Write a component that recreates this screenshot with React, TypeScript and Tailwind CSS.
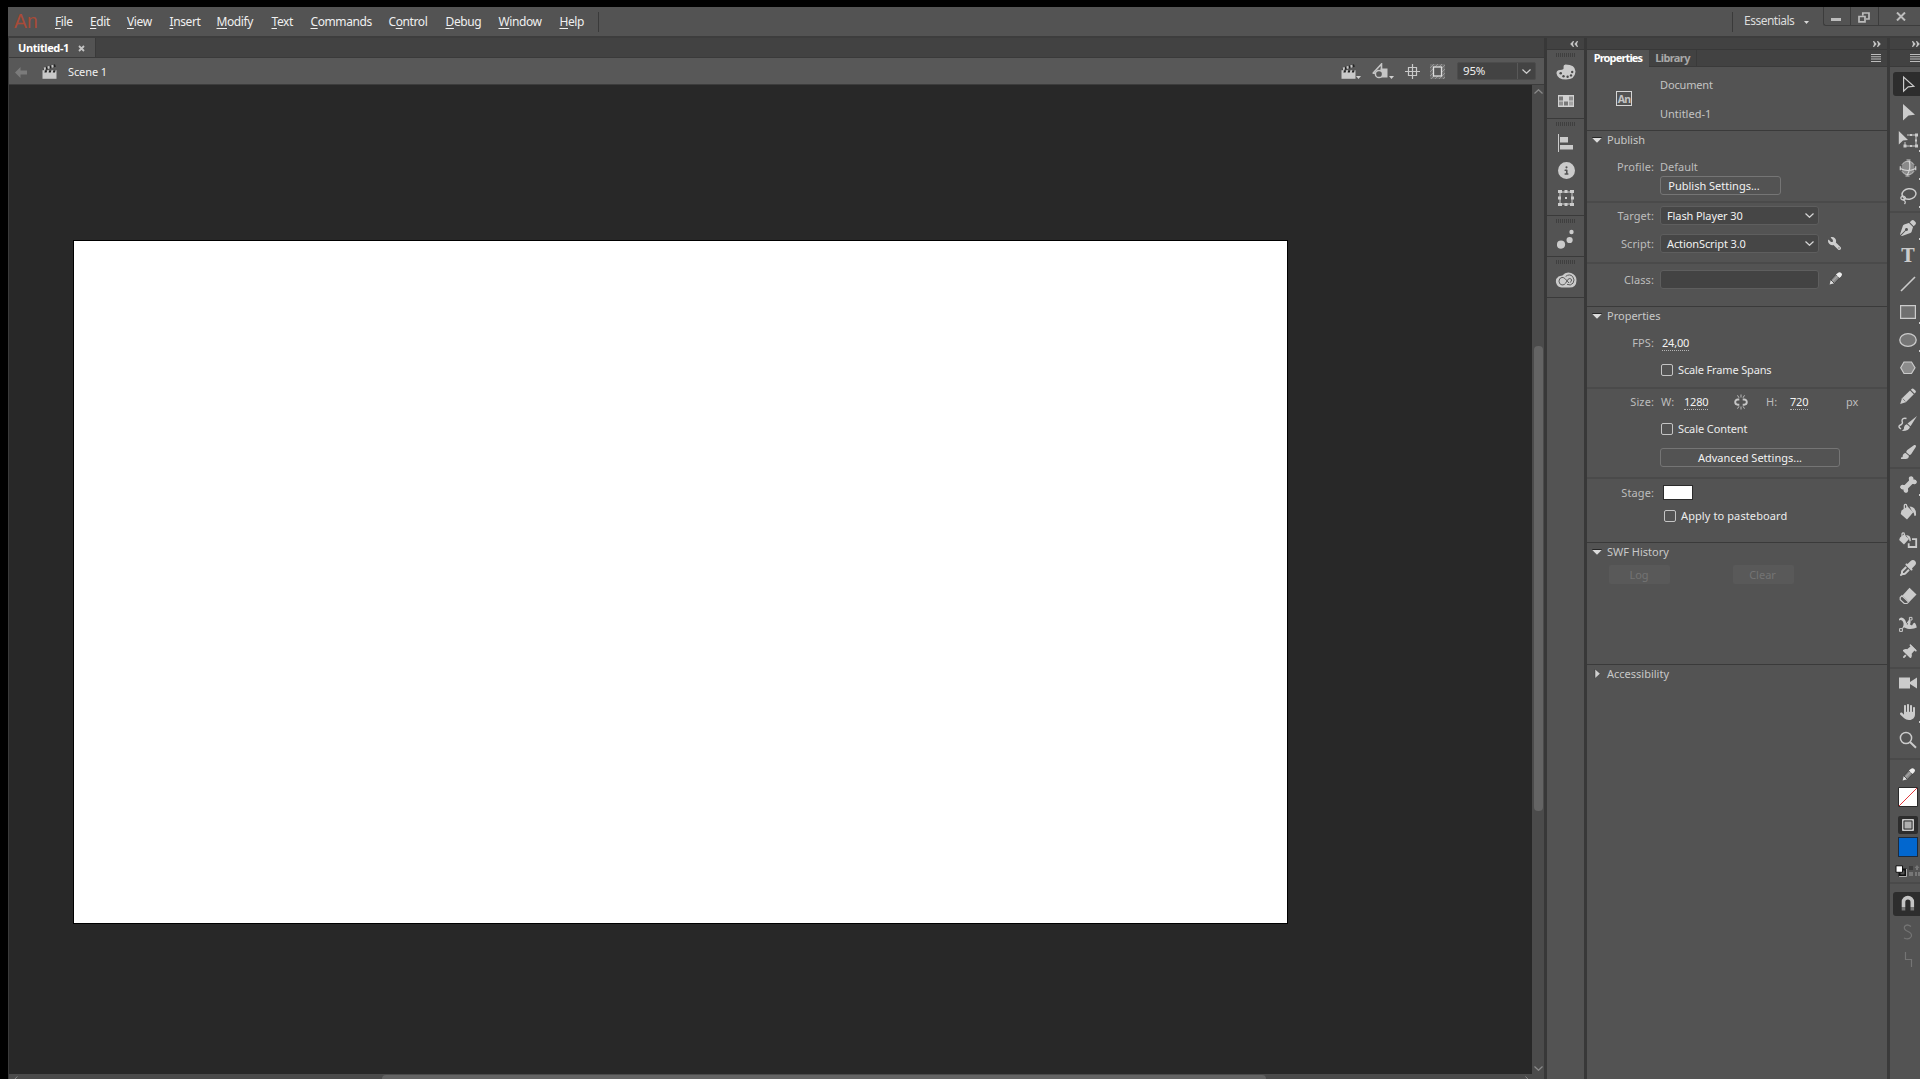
import { ReactNode } from 'react';
import {
  FaBone,
  FaCircleInfo,
  FaEyeDropper,
  FaHand,
  FaPaintbrush,
  FaPenNib,
  FaThumbtack,
  FaWrench
} from 'react-icons/fa6';

type MenuItem = {
  label: string;
  key: number;
  className: string;
};

// key is the index of the underlined letter
const menu: MenuItem[] = [
  { label: 'File', key: 0, className: 'w-[35px]' },
  { label: 'Edit', key: 0, className: 'w-[37px]' },
  { label: 'View', key: 0, className: 'w-[42.5px]' },
  { label: 'Insert', key: 0, className: 'w-[47px]' },
  { label: 'Modify', key: 0, className: 'w-[55px]' },
  { label: 'Text', key: 0, className: 'w-[39px]' },
  { label: 'Commands', key: 0, className: 'w-[78px]' },
  { label: 'Control', key: 1, className: 'w-[57px]' },
  { label: 'Debug', key: 0, className: 'w-[53px]' },
  { label: 'Window', key: 0, className: 'w-[61px]' },
  { label: 'Help', key: 0, className: 'w-[38px]' }
];

function Chevron({ className = '' }: { className?: string }) {
  return (
    <svg width="9" height="5" viewBox="0 0 9 5" fill="none" stroke="currentColor" strokeWidth="1.2" className={`shrink-0 ${className}`}>
      <path d="M.5 .5 4.5 4.3 8.5 .5" />
    </svg>
  );
}

function Chevrons({ flip = false }: { flip?: boolean }) {
  return (
    <svg width="8" height="6" viewBox="0 0 8 6" fill="#c4c4c4" className={`shrink-0 ${flip ? 'rotate-180' : ''}`}>
      <path d="M0 0 1 0 3.7 3 1 6 0 6 1 3ZM4 0 5 0 7.8 3 5 6 4 6 5 3Z" />
    </svg>
  );
}

function Burger() {
  return (
    <svg width="10" height="8" viewBox="0 0 10 8" fill="#bdbdbd" className="shrink-0">
      <path d="M0 0h10v1H0zM0 2.3h10v1H0zM0 4.6h10v1H0zM0 6.9h10v1H0z" />
    </svg>
  );
}

function Clapper() {
  return (
    <svg width="15" height="15" viewBox="0 0 15 15" className="shrink-0">
      <path d="M.8 3.8 13 .2 13.8 2.8 1.6 6.4Z" fill="#222" />
      <path d="M1.5 3.6 3.7 2.9 4 5.6 2 6.2ZM5.3 2.5 7.5 1.8 7.8 4.5 5.8 5.1ZM9.2 1.3 11.4 .7 11.7 3.3 9.7 3.9Z" fill="#c6c6c6" />
      <path d="M.5 6.2h14V14.8H.5z" fill="#c9c9c9" />
      <path d="M3 6.2h2.2L4.6 8.4H2.4zM7.2 6.2h2.2L8.8 8.4H6.6zM11.4 6.2h2.2L13 8.4H10.8z" fill="#222" />
    </svg>
  );
}

function SmallPencil() {
  return (
    <svg width="13" height="13" viewBox="0 0 13 13" className="shrink-0">
      <path d="M.6 12.6 1.8 8 5.3 11.3Z" fill="#dedede" />
      <path d="M1.9 7.9 6.7 2.6 10.5 6.1 5.4 11.4Z" fill="#8a8a8a" stroke="#333" strokeWidth=".7" />
      <path d="M3.6 9.2 8.5 4.2" stroke="#a6a6a6" strokeWidth="1.2" />
      <path d="M6.9 2.6 8.8 .9Q10.6 -.4 12.2 1T12.2 4.2L10.4 6Z" fill="#ededed" />
    </svg>
  );
}

function Toolbar() {
  return (
    <div className="flex h-[27px] shrink-0 items-center border-b border-[#3c3c3c] bg-[#585858] pl-[6px] text-[#f0f0f0]">
      <svg width="12" height="11" viewBox="0 0 12 11" fill="#7b7b7b" className="mt-0.5 mr-[15px]">
        <path d="M0 5.5 5.5 0V3.5H12V7.5H5.5V11Z" />
      </svg>
      <Clapper />
      <span className="mt-px ml-[11px] text-[11px] leading-4 tracking-[-0.1px]">Scene 1</span>
      <div className="ml-auto flex items-center pr-[8px]">
        <Clapper />
        <Dot />
        <svg width="17" height="16" viewBox="0 0 17 16" className="ml-[11px]">
          <path d="M1.2 10 9.5 1V7" fill="none" stroke="#c6c6c6" strokeWidth="1.6" />
          <path d="M8.5 5.5H15.5V14.5H8.5Z" fill="#c6c6c6" />
          <circle cx="7" cy="11" r="3.6" fill="#585858" stroke="#c6c6c6" strokeWidth="1.5" />
          <path d="M.6 10.2H4" stroke="#c6c6c6" strokeWidth="1.5" />
        </svg>
        <Dot />
        <svg width="15" height="15" viewBox="0 0 15 15" fill="none" stroke="#c9c9c9" strokeWidth="1.2" className="ml-[11px]">
          <path d="M7.5 0V15M0 7.5H15M3.5 3.5H11.5V11.5H3.5Z" />
        </svg>
        <svg width="15" height="15" viewBox="0 0 15 15" className="ml-[10px]">
          <rect width="15" height="15" fill="#6c6c6c" />
          <path d="M0 4 4 0M0 8 8 0M0 12 12 0M0 16 16 0M4 16 16 4M8 16 16 8M12 16 16 12" stroke="#999" strokeWidth=".9" />
          <rect x="3.5" y="3" width="8" height="9" fill="#585858" stroke="#dedede" strokeWidth="1.3" />
        </svg>
        <div className="ml-[12px] flex h-[18px] w-[79px] rounded-[2px] border border-[#4c4c4c] bg-[#434343]">
          <span className="w-[60px] border-r border-[#585858] pl-[5px] text-[11.5px] leading-4 tracking-[-0.2px]">95%</span>
          <Chevron className="mt-[6px] ml-[4px] text-[#cfcfcf]" />
        </div>
      </div>
    </div>
  );
}

function Dot() {
  return (
    <svg width="5" height="3" viewBox="0 0 5 3" fill="#d0d0d0" className="mt-[13px]">
      <path d="M0 0H5L2.5 3Z" />
    </svg>
  );
}

function Grip() {
  return (
    <svg width="20" height="4" viewBox="0 0 20 4" fill="#3f3f3f" className="mx-auto mt-[3px] shrink-0">
      <path d="M0 0h1v4H0zM2 0h1v4H2zM4 0h1v4H4zM6 0h1v4H6zM8 0h1v4H8zM10 0h1v4H10zM12 0h1v4H12zM14 0h1v4H14zM16 0h1v4H16zM18 0h1v4H18z" />
    </svg>
  );
}

function DockCell({ children }: { children: ReactNode }) {
  return <div className="flex h-7 items-center justify-center pl-px text-[#cbcbcb]">{children}</div>;
}

function Dock() {
  return (
    <div className="flex w-[43px] shrink-0 flex-col border-x-[3px] border-[#383838] bg-[#535353]">
      <div className="flex h-3 items-center justify-end border-b border-[#383838] bg-[#424242] pr-[6px]">
        <Chevrons flip />
      </div>
      <div className="h-[69px] border-b border-[#3a3a3a]">
        <Grip />
        <div className="pt-px">
          <DockCell>
            <svg width="20" height="16" viewBox="0 0 20 16">
              <path d="M9.5 .5Q19.3 .5 19.5 7.5 19 15.5 10 15.5 1.5 15.5 .5 9.5 .3 6.3 4 6 8.5 6 7.5 3 7.3 .8 9.5 .5Z" fill="currentColor" />
              <g fill="#4a4a4a">
                <circle cx="4.7" cy="9.3" r="1.3" />
                <circle cx="7.5" cy="12.3" r="1.2" />
                <circle cx="11.6" cy="12.8" r="1.2" />
                <circle cx="15" cy="11.4" r="1.2" />
                <circle cx="16.2" cy="8" r="1.2" />
              </g>
            </svg>
          </DockCell>
          <DockCell>
            <svg width="16" height="12" viewBox="0 0 16 12" className="mt-px">
              <path d="M0 0H16V12H0Z" fill="#d2d2d2" />
              <path d="M1 1.5H5V5.5H1ZM6 6.5H10V10.5H6Z" fill="#777" />
              <path d="M11 1.5H15V5.5H11ZM1 6.5H5V10.5H1Z" fill="#8f8f8f" />
              <path d="M11 6.5H15V10.5H11Z" fill="#a5a5a5" />
            </svg>
          </DockCell>
        </div>
      </div>
      <div className="h-[97px] border-b border-[#3a3a3a]">
        <Grip />
        <div className="pt-[2px]">
          <DockCell>
            <svg width="16" height="18" viewBox="0 0 16 18" fill="currentColor" className="mt-px">
              <path d="M0 0h1v18H0zM2 3h8v5.5H2zM2 11h13v4.5H2z" />
            </svg>
          </DockCell>
          <DockCell>
            <FaCircleInfo size={17} />
          </DockCell>
          <DockCell>
            <svg width="16" height="16" viewBox="0 0 16 16" fill="currentColor">
              <path d="M2 2H14V14H2Z" fill="none" stroke="currentColor" />
              <path d="M0 0h4v3H0zM6.5 0h3v3h-3zM12 0h4v3h-4zM0 6.5h3v3H0zM13 6.5h3v3h-3zM0 13h4v3H0zM6.5 13h3v3h-3zM12 13h4v3h-4zM7 7h2v2H7z" />
            </svg>
          </DockCell>
        </div>
      </div>
      <div className="h-[41px] border-b border-[#3a3a3a]">
        <Grip />
        <div className="pt-0.5">
          <DockCell>
            <svg width="18" height="20" viewBox="0 0 18 20" fill="currentColor">
              <circle cx="4" cy="15.6" r="4.1" />
              <circle cx="12.6" cy="11" r="3.1" />
              <circle cx="14.5" cy="3" r="2.2" />
            </svg>
          </DockCell>
        </div>
      </div>
      <div className="h-[41px] border-b border-[#3a3a3a]">
        <Grip />
        <div className="pt-0.5">
          <DockCell>
            <svg width="22" height="16" viewBox="0 0 22 16">
              <path d="M6.5 15.5A6 6 0 0 1 3.5 4.6Q4.8 3.6 7.4 3.4A8 8 0 0 1 21.5 8.4Q21.3 15.5 14.5 15.5Z" fill="#cbcbcb" />
              <path d="M10.6 11.2Q9.5 13 7 13A3.9 3.9 0 0 1 7 5.4Q9 5.4 10.3 6.9L14 11M10.7 4.4Q14.5 1.4 17.7 4.6 20.2 8 18 11.2 15.5 14.2 12 12.3M10.6 11.2 13 7.3Q15 5.6 16.5 7.4 17 9.5 14.8 10.6" fill="none" stroke="#5a5a5a" />
            </svg>
          </DockCell>
        </div>
      </div>
    </div>
  );
}

function Section({ title, closed = false, className, children }: { title: string; closed?: boolean; className: string; children?: ReactNode }) {
  return (
    <section className={`shrink-0 border-t border-[#3a3a3a] ${className}`}>
      <div className="flex h-[18px] items-center pl-[5px] text-[#c8c8c8]">
        <svg width="10" height="10" viewBox="0 0 10 10" className="mr-[5px]">
          {closed ? (
            <path d="M3 0V9.5L8.3 4.7Z" fill="#d0d0d0" stroke="#333" strokeWidth=".5" />
          ) : (
            <>
              <path d="M.3 2H9.7V3H.3Z" fill="#262626" />
              <path d="M.3 3H9.7L5 7.8Z" fill="#dcdcdc" />
            </>
          )}
        </svg>
        {title}
      </div>
      {children}
    </section>
  );
}

function Label({ children }: { children: ReactNode }) {
  return <span className="mr-[6px] w-[67px] shrink-0 text-right tracking-[0.1px] text-[#bdbdbd]">{children}</span>;
}

function Rule({ className = '' }: { className?: string }) {
  return <div className={`h-0.5 shrink-0 bg-[#4a4a4a] ${className}`} />;
}

function Select({ value }: { value: string }) {
  return (
    <div className="flex h-[19px] w-[159px] items-center justify-between rounded-[3px] border border-[#5e5e5e] bg-[#464646] pr-[4px] pl-[6px] tracking-[-0.1px] text-[#f2f2f2]">
      {value}
      <Chevron className="text-[#d6d6d6]" />
    </div>
  );
}

function Checkbox({ label, className }: { label: string; className: string }) {
  return (
    <div className={`flex h-3 items-center text-[#ececec] ${className}`}>
      <span className="mr-[5px] h-3 w-3 rounded-[2px] border border-[#c4c4c4]" />
      {label}
    </div>
  );
}

function HotText({ children }: { children: string }) {
  return <span className="border-b border-dotted border-[#b5b5b5] leading-[13px] tracking-[-0.2px] text-[#f2f2f2]">{children}</span>;
}

function PropertiesPanel() {
  return (
    <div className="flex w-[300px] shrink-0 flex-col bg-[#535353] text-[11px] leading-[14px]">
      <div className="flex h-3 shrink-0 items-center justify-end border-b border-[#383838] bg-[#424242] pr-[6px]">
        <Chevrons />
      </div>
      <div className="flex h-[17px] shrink-0 bg-[#424242] font-bold tracking-[-0.85px]">
        <span className="w-[62px] bg-[#535353] pt-px text-center text-white">Properties</span>
        <span className="w-[48px] border-r border-b border-[#3a3a3a] pt-px text-center tracking-[-0.6px] text-[#a8a8a8]">Library</span>
        <div className="flex flex-1 items-center justify-end border-b border-[#3a3a3a] pr-[6px]">
          <Burger />
        </div>
      </div>
      <div className="flex h-[63px] shrink-0 text-[#c3c3c3]">
        <span className="mt-[24px] ml-[29px] flex h-[15px] w-4 items-center justify-center border border-[#d5d5d5] text-[10.5px] font-bold tracking-[-0.7px]">An</span>
        <div className="ml-[28px] flex flex-col gap-[15px] pt-[11px]">
          <span className="tracking-[-0.15px]">Document</span>
          <span>Untitled-1</span>
        </div>
      </div>

      <Section title="Publish" className="h-[176px]">
        <div className="flex pt-[11px]">
          <Label>Profile:</Label>
          <span className="text-[#bdbdbd]">Default</span>
        </div>
        <button className="mt-[2px] ml-[73px] block h-[19px] w-[121px] rounded-[3px] border border-[#757575] pr-[13px] text-center text-[#f2f2f2]">Publish Settings...</button>
        <Rule className="mt-[6px]" />
        <div className="flex items-center pt-[3px]">
          <Label>Target:</Label>
          <Select value="Flash Player 30" />
        </div>
        <div className="flex items-center pt-[9px]">
          <Label>Script:</Label>
          <Select value="ActionScript 3.0" />
          <FaWrench size={13} className="ml-[9px] scale-x-[-1] text-[#cfcfcf]" />
        </div>
        <Rule className="mt-[9px]" />
        <div className="flex items-center pt-[6px]">
          <Label>Class:</Label>
          <div className="mr-[10px] h-[19px] w-[159px] rounded-[3px] border border-[#5e5e5e] bg-[#434343]" />
          <div className="-mt-0.5">
            <SmallPencil />
          </div>
        </div>
      </Section>

      <Section title="Properties" className="h-[236px]">
        <div className="flex pt-[11px]">
          <Label>FPS:</Label>
          <span className="ml-0.5">
            <HotText>24,00</HotText>
          </span>
        </div>
        <Checkbox label="Scale Frame Spans" className="mt-[14px] ml-[74px] tracking-[-0.15px]" />
        <Rule className="mt-[11px]" />
        <div className="flex pt-[6px] text-[#bdbdbd]">
          <Label>Size:</Label>
          <span className="ml-px w-[23px]">W:</span>
          <span className="w-[49px]">
            <HotText>1280</HotText>
          </span>
          <svg width="16" height="16" viewBox="0 0 16 16" fill="none" stroke="#c6c6c6" className="-mt-px">
            <path d="M6.3 5.5H4.8A2.6 2.6 0 0 0 4.8 10.7H6.3M9.7 5.5H11.2A2.6 2.6 0 0 1 11.2 10.7H9.7" strokeWidth="1.9" />
            <path d="M8 .5V3.5M8 12.5V15.5M4.5 1.3 6 3.8M11.5 1.3 10 3.8M4.5 14.7 6 12.3M11.5 14.7 10 12.3" strokeWidth=".9" />
          </svg>
          <span className="ml-[17px] w-6">H:</span>
          <span className="w-[56px]">
            <HotText>720</HotText>
          </span>
          <span>px</span>
        </div>
        <Checkbox label="Scale Content" className="mt-[13px] ml-[74px] tracking-[-0.1px]" />
        <button className="mt-[13px] ml-[73px] block h-[19px] w-[180px] rounded-[3px] border border-[#757575] text-center text-[#f2f2f2]">Advanced Settings...</button>
        <Rule className="mt-[10px]" />
        <div className="flex items-center pt-[6px]">
          <Label>Stage:</Label>
          <span className="ml-[3px] h-[15px] w-[30px] border border-[#2b2b2b] bg-white" />
        </div>
        <Checkbox label="Apply to pasteboard" className="mt-[10px] ml-[77px] tracking-[0.1px]" />
      </Section>

      <Section title="SWF History" className="h-[122px]">
        <div className="flex gap-[63px] pt-[4px] pl-[22px] text-[#747474]">
          <span className="h-[19px] w-[61px] rounded-[2px] bg-[#595959] pt-[3px] pr-px text-center">Log</span>
          <span className="h-[19px] w-[61px] rounded-[2px] bg-[#595959] pt-[3px] pr-0.5 text-center">Clear</span>
        </div>
      </Section>
      <Section title="Accessibility" closed className="flex-1" />
    </div>
  );
}

function Tool({ children, corner = false, active = false }: { children: ReactNode; corner?: boolean; active?: boolean }) {
  return (
    <div className="flex h-7 shrink-0 items-center pl-[3px] text-[#cbcbcb]">
      <div className={`flex h-6 w-[27px] items-center rounded-l-[3px] pl-[5px] ${active ? 'bg-[#2d2d2d]' : ''}`}>
        <span className="flex w-5 shrink-0 justify-center">{children}</span>
        {corner && <span className="mt-[21px] ml-px h-[2px] w-px bg-[#d0d0d0]" />}
      </div>
    </div>
  );
}

function Glyph({ children }: { children: ReactNode }) {
  return (
    <svg width="20" height="20" viewBox="0 0 20 20" fill="currentColor" className="shrink-0">
      {children}
    </svg>
  );
}

function Tools() {
  return (
    <div className="flex w-[33px] shrink-0 flex-col overflow-hidden border-l-[3px] border-[#3a3a3a] bg-[#535353]">
      <div className="flex h-3 shrink-0 items-center justify-end border-b border-[#383838] bg-[#424242]">
        <Chevrons />
      </div>
      <div className="mb-[3px] flex h-[17px] shrink-0 items-center justify-end border-b border-[#3a3a3a] bg-[#424242]">
        <Burger />
      </div>
      <Tool active>
        <Glyph>
          <path d="M5.6 3V17.2L10.2 12.9 15.8 12.3Z" fill="none" stroke="currentColor" strokeWidth="1.2" />
        </Glyph>
      </Tool>
      <Tool>
        <Glyph>
          <path d="M5 2V18.5L10.5 13.5 17 12.7Z" />
        </Glyph>
      </Tool>
      <Tool corner>
        <Glyph>
          <path d="M.8 1V14.5L5 10.5 10 10Z" />
          <path d="M9 5H18V16H7V12" fill="none" stroke="currentColor" />
          <path d="M17 3.5h3v3h-3zM12 4h2v2h-2zM17 9.5h2v2h-2zM17 14.5h3v3h-3zM12 15h2v2h-2zM5.5 14.5h3v3h-3z" />
        </Glyph>
      </Tool>
      <Tool corner>
        <Glyph>
          <circle cx="10" cy="10" r="6.6" fill="#8a8a8a" />
          <path d="M4 6.7A7 7 0 0 1 16 6.7M4 13.3A7 7 0 0 0 16 13.3" fill="none" stroke="currentColor" />
          <path d="M11 2.5Q13.5 10 9 17.5M2.3 10.5Q10 14.5 17.7 10.5" fill="none" stroke="#d8d8d8" strokeWidth="1.1" />
          <path d="M2.3 8.3v4M17.7 8.3v4M8.5 2h4M7.5 18h4" stroke="#d0d0d0" strokeWidth="1.2" />
        </Glyph>
      </Tool>
      <Tool corner>
        <Glyph>
          <ellipse cx="11" cy="8" rx="7" ry="5.2" transform="rotate(-8 11 8)" fill="none" stroke="currentColor" strokeWidth="1.5" />
          <path d="M6.5 18Q8.5 15.5 5.5 14.2 2.2 13.5 3 11.3 5.2 9 7.3 11.5 7.7 14.3 4.8 13" fill="none" stroke="currentColor" strokeWidth="1.3" />
        </Glyph>
      </Tool>
      <Rule className="mt-px mb-px" />
      <Tool corner>
        <FaPenNib size={16} />
      </Tool>
      <Tool>
        <span className="font-['DejaVu_Serif',serif] text-[18px] leading-5 font-bold">T</span>
      </Tool>
      <Tool>
        <Glyph>
          <path d="M3 17 17 3" stroke="currentColor" strokeWidth="1.6" />
        </Glyph>
      </Tool>
      <Tool corner>
        <Glyph>
          <path d="M2.6 3.6H17.4V16.4H2.6Z" fill="#707070" stroke="currentColor" strokeWidth="1.2" />
        </Glyph>
      </Tool>
      <Tool corner>
        <Glyph>
          <ellipse cx="10" cy="10" rx="8.2" ry="6.4" fill="#767676" stroke="currentColor" strokeWidth="1.3" />
        </Glyph>
      </Tool>
      <Tool>
        <Glyph>
          <path d="M6 4H13.5L17 9.7 13.5 15.5H6L2.7 9.7Z" fill="#8c8c8c" stroke="currentColor" strokeWidth="1.2" />
        </Glyph>
      </Tool>
      <Tool>
        <Glyph>
          <path d="M2.2 18 4 12.3 12 4.5 15.8 8.3 7.8 16.2Z" />
          <path d="M12.8 3.7 14 2.7Q15 2.2 16 3.2L17.6 4.8Q18.3 5.8 17.6 6.6L16.5 7.5Z" />
          <path d="M4.8 12.7 7.4 15.4" stroke="#6a6a6a" strokeWidth=".8" />
        </Glyph>
      </Tool>
      <Tool>
        <Glyph>
          <path d="M19 2 9.5 9.5 12.5 12.3Z" />
          <path d="M8.8 10.2 12 13Q10.5 17.5 3.5 17 6.5 15.5 6 13.2 6.5 10.7 8.8 10.2Z" />
          <path d="M8.5 4.5Q4 3.5 4 7 5.5 10 1.5 11.5 0 13 3 15" fill="none" stroke="currentColor" strokeWidth="1.4" />
        </Glyph>
      </Tool>
      <Tool>
        <FaPaintbrush size={16} />
      </Tool>
      <Rule className="mt-px mb-px" />
      <Tool corner>
        <FaBone size={17} className="-rotate-45" />
      </Tool>
      <Tool>
        <Glyph>
          <path d="M3.5 8.5 9.5 4.5 15.3 10.2 9 17.5 2.7 12Z" />
          <path d="M6.3 9V3.6Q6.5 2 8.2 2.5L10.5 9" fill="none" stroke="currentColor" strokeWidth="1.3" />
          <path d="M11.5 4.5Q18.5 4.5 18 13.5L16.4 14Q16.5 10.5 14 9Z" />
        </Glyph>
      </Tool>
      <Tool>
        <Glyph>
          <path d="M2 7.5 6 4.5 11 9 6 14.5 1.2 10Z" />
          <path d="M4 7.5V3.7Q4.5 2.5 6 3L7.5 7.5" fill="none" stroke="currentColor" strokeWidth="1.2" />
          <path d="M8 5Q13.2 5 12.8 11L11.6 11.4Q11.6 9.3 10 8Z" />
          <path d="M14 9.2H18.2V17H10.7V13.3" fill="none" stroke="currentColor" strokeWidth="1.8" />
        </Glyph>
      </Tool>
      <Tool>
        <FaEyeDropper size={16} />
      </Tool>
      <Tool>
        <Glyph>
          <path d="M11.5 1.8 18.5 8.5 11.3 16 4.5 9.5Z" />
          <path d="M4 9.7 10.6 16.1 9 17.5H6.2L2.2 13.7V11.5Z" fill="none" stroke="currentColor" strokeWidth="1.2" />
        </Glyph>
      </Tool>
      <Tool>
        <Glyph>
          <path d="M1 5Q2.5 2.5 5 4 8.5 6.5 8 10L10 10.5Q9.5 6.5 11.5 6 13.5 6.5 12 10.5L14 11.5Q15.5 8 17 9 18.5 11 18.8 13.5 15.5 15.5 9.5 14.8L5 13Q6.5 8.5 4 6.5 2.5 5.5 1 6.5Z" />
          <path d="M3 16 12.5 5" stroke="currentColor" strokeWidth="1.1" />
          <path d="M11.4 3.4h2.6v2.6h-2.6zM1.6 14.6h2.8v2.8H1.6z" fill="#535353" stroke="currentColor" />
        </Glyph>
      </Tool>
      <Tool>
        <FaThumbtack size={15} className="rotate-45" />
      </Tool>
      <Rule className="mt-px" />
      <Tool>
        <Glyph>
          <path d="M1 4.5H12V15.5H1ZM12 9 19 4.5V15.5L12 11Z" />
        </Glyph>
      </Tool>
      <Tool corner>
        <FaHand size={16} className="mt-px" />
      </Tool>
      <Tool>
        <Glyph>
          <circle cx="8" cy="9" r="5.6" fill="none" stroke="currentColor" strokeWidth="1.5" />
          <path d="M12 13 18 18.7" stroke="currentColor" strokeWidth="2" />
        </Glyph>
      </Tool>
      <Rule className="mt-[5px]" />
      <div className="flex flex-col items-start pt-[8px] pl-[8px]">
        <div className="ml-[4px]">
          <SmallPencil />
        </div>
        <svg width="20" height="20" viewBox="0 0 20 20" className="mt-[6px]">
          <path d="M.5 .5H19.5V19.5H.5Z" fill="#fff" stroke="#2a2a2a" />
          <path d="M1 19 19 1" stroke="#e0383c" />
        </svg>
        <svg width="20" height="18" viewBox="0 0 20 18" className="mt-[9px]">
          <rect width="20" height="18" rx="2" fill="#2d2d2d" />
          <path d="M4.5 3.5H15.5V14.5H4.5Z" fill="#b0b0b0" stroke="#c8c8c8" />
          <path d="M6 5H14V13H6Z" fill="none" stroke="#333" />
        </svg>
        <div className="mt-[3px] h-5 w-5 border border-[#1e2b3c] bg-[#0267cf]" />
      </div>
      <svg width="26" height="12" viewBox="0 0 26 12" className="mt-[8px] ml-[5px] shrink-0">
        <path d="M4.5 4.5H10.5V10.5H4.5Z" fill="none" stroke="#111" strokeWidth="2" />
        <path d="M11.5 4V11.5H4" fill="none" stroke="#ccc" strokeWidth=".8" />
        <path d="M1 .8H7.5V7.3H1Z" fill="#fff" stroke="#111" />
        <path d="M14 1h4v4h-4z" fill="#3c3c3c" />
        <path d="M14 7h4v4h-4zM20 7h2v4h-2zM23 7h2v4h-2zM19.5 3 22 0 24.5 3H23V5H21V3Z" fill="#777" />
      </svg>
      <Rule className="mt-[5px] mb-[6px]" />
      <Tool active>
        <Glyph>
          <path d="M5.5 13V8A4.4 4.4 0 0 1 14.3 8V13" fill="none" stroke="#c4c4c4" strokeWidth="3.6" />
          <path d="M3.7 13h3.6v3.5H3.7zM12.5 13h3.6v3.5h-3.6z" fill="#777" />
        </Glyph>
      </Tool>
      <Tool>
        <Glyph>
          <path d="M13 4.5Q9 1.5 6.5 4.5 5.5 7.5 9.5 9.3 14.5 11.5 13.3 14.5 11 18.5 6 16" fill="none" stroke="#747474" strokeWidth="1.2" />
        </Glyph>
      </Tool>
      <Tool>
        <Glyph>
          <path d="M7.5 2V9.5H13.5V17" fill="none" stroke="#747474" strokeWidth="1.2" />
        </Glyph>
      </Tool>
    </div>
  );
}

function TitleBar() {
  return (
    <div className="flex h-[31px] shrink-0 border-b-2 border-[#3d3d3d] bg-[#535353] text-[12px] leading-[30px] text-[#f0f0f0]">
      <span className="w-[47px] pl-[6px] font-['Liberation_Sans',sans-serif] text-[21px] leading-[28px] text-[#a94b38]">
        <span className="inline-block origin-left scale-x-[.92]">An</span>
      </span>
      {menu.map(item => (
        <span key={item.label} className={`shrink-0 tracking-[-0.4px] whitespace-nowrap ${item.className}`}>
          {item.label.slice(0, item.key)}
          <span className="underline underline-offset-2">{item.label[item.key]}</span>
          {item.label.slice(item.key + 1)}
        </span>
      ))}
      <span className="mt-[5px] h-5 w-px bg-[#3a3a3a]" />
      <span className="mt-[5px] ml-auto h-5 w-px bg-[#3a3a3a]" />
      <span className="ml-[11px] w-[60px] leading-[28px] tracking-[-0.5px] text-[#dcdcdc]">Essentials</span>
      <svg width="5" height="3" viewBox="0 0 5 3" fill="#d8d8d8" className="mt-[14px] mr-[14px]">
        <path d="M0 0H5L2.5 3Z" />
      </svg>
      <div className="flex h-[19px] w-[97px] rounded-bl-[3px] border-b border-l border-[#3c3c3c] text-[#bcbcbc]">
        <div className="w-[27px] border-r border-[#3c3c3c] pt-[11px] pl-[7px]">
          <div className="h-[3px] w-[10px] bg-[#bcbcbc]" />
        </div>
        <div className="w-[28px] border-r border-[#3c3c3c] pt-[5px] pl-[7px]">
          <svg width="12" height="11" viewBox="0 0 12 11" fill="none" stroke="currentColor" strokeWidth="1.7">
            <path d="M4.8 3.5V1H11V7H8M1 4.5H7V9.8H1Z" />
          </svg>
        </div>
        <svg width="10" height="9" viewBox="0 0 10 9" fill="none" stroke="currentColor" strokeWidth="2" className="mt-[5px] ml-[17px]">
          <path d="M1 .5 9 8.5M9 .5 1 8.5" />
        </svg>
      </div>
    </div>
  );
}

function Workspace() {
  return (
    <div className="flex min-w-0 flex-1 flex-col">
      <div className="flex h-5 shrink-0 border-b border-[#3a3a3a] bg-[#424242]">
        <div className="flex w-[87px] items-center border-r border-[#3a3a3a] bg-[#535353] pt-px pl-[9px] text-[11px] font-bold tracking-[-0.4px] text-white">
          Untitled-1
          <svg width="7" height="7" viewBox="0 0 7 7" stroke="#c4c4c4" strokeWidth="1.8" className="ml-[9px]">
            <path d="M1 1 6 6M6 1 1 6" />
          </svg>
        </div>
      </div>
      <Toolbar />
      <div className="flex min-h-0 flex-1">
        <div className="flex-1 bg-[#282828] pt-[155px] pl-[64px]">
          <div className="h-[684px] w-[1215px] border border-black bg-white" />
        </div>
        <div className="flex w-3 flex-col items-center bg-[#4b4b4b] text-[#8a8a8a]">
          <Chevron className="mt-[4px] rotate-180" />
          <div className="mt-[252px] mb-auto h-[465px] w-[9px] rounded-[4px] bg-[#646464]" />
          <Chevron className="mb-[3px]" />
        </div>
      </div>
      <div className="flex h-[5px] shrink-0 items-start overflow-hidden bg-[#4b4b4b] text-[#8a8a8a]">
        <svg width="5" height="9" viewBox="0 0 5 9" fill="none" stroke="currentColor" className="mt-0.5 ml-[4px] shrink-0">
          <path d="M4.3 .5 .5 4.5 4.3 8.5" />
        </svg>
        <div className="mt-px mr-auto ml-[364px] h-1 w-[884px] rounded-t-[4px] bg-[#646464]" />
        <svg width="5" height="9" viewBox="0 0 5 9" fill="none" stroke="currentColor" className="mt-0.5 mr-[14px] shrink-0">
          <path d="M.5 .5 4.3 4.5 .5 8.5" />
        </svg>
      </div>
    </div>
  );
}

export default function App() {
  return (
    <div className="flex h-[1079px] w-[1920px] flex-col overflow-hidden bg-black pt-[7px] pl-[8px] font-['Noto_Sans','Open_Sans',sans-serif]">
      <TitleBar />
      <div className="flex min-h-0 flex-1 border-l border-[#3a3a3a]">
        <Workspace />
        <Dock />
        <PropertiesPanel />
        <Tools />
      </div>
    </div>
  );
}
